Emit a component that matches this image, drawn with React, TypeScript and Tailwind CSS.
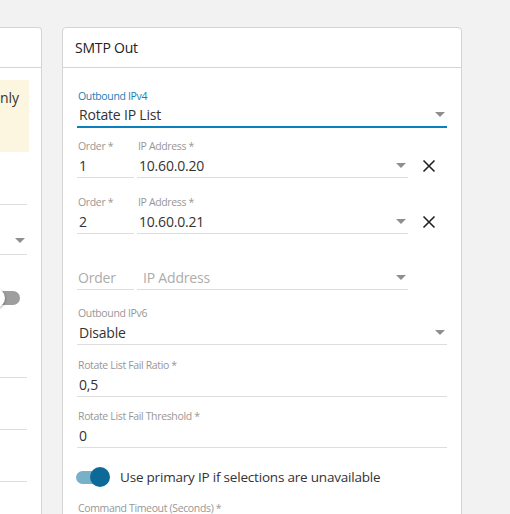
import React from "react";

const F = { fontFamily: '"Open Sans", "Noto Sans", sans-serif' };

function Arrow() {
  return (
    <svg width="10" height="5" viewBox="0 0 10 5" className="shrink-0">
      <path d="M0 0 L10 0 L5 5 Z" fill="#8f8f8f" />
    </svg>
  );
}

function XIcon() {
  return (
    <svg width="14" height="14" viewBox="0 0 14 14">
      <path d="M1.5 1.5 L12.5 12.5 M12.5 1.5 L1.5 12.5" stroke="#222" strokeWidth="1.6" />
    </svg>
  );
}

const LBL = "h-[14px] text-[10.5px] tracking-[-0.35px] leading-[14px] text-[#979797] pl-[1px] whitespace-nowrap";
const VAL = "text-[14px] tracking-[-0.2px] text-[#333] pl-[2px] whitespace-nowrap";

function Field({ label, value, select, className = "", placeholder, phPad = "pl-[2px]" }: { label?: string; value?: string; select?: boolean; className?: string; placeholder?: string; phPad?: string }) {
  return (
    <div className={"flex flex-col border-b border-[#dedede] " + className}>
      <div className={LBL}>{label}</div>
      <div className="h-[24px] flex items-center justify-between pr-[2px]">
        {value !== undefined ? (
          <span className={VAL}>{value}</span>
        ) : (
          <span className={"text-[14px] tracking-[-0.2px] text-[#acacac] whitespace-nowrap " + phPad}>{placeholder}</span>
        )}
        {select && <Arrow />}
      </div>
    </div>
  );
}

export default function App() {
  return (
    <div className="w-[510px] h-[514px] overflow-hidden bg-[#f2f2f2] pt-[27px] flex gap-[20px]" style={F}>
      {/* left panel (cut off) */}
      <div className="w-[42px] shrink-0 h-[600px] bg-white border-t border-r border-[#d4d4d4] rounded-tr-[4px] flex flex-col">
        <div className="h-[40px] border-b border-[#d4d4d4] shrink-0" />
        <div className="mt-[12px] w-[29px] h-[72px] bg-[#fcf6e0] pt-[8px] text-[14px] text-[#333] leading-[20px] text-right pr-[15px] overflow-hidden">
          <span className="block -mr-[1px]">nly</span>
        </div>
        <div className="mt-[52px] w-[27px] border-b border-[#dedede]" />
        <div className="w-[27px] h-[50px] border-b border-[#dedede] flex items-end justify-end pb-[11px] pr-[2px]">
          <Arrow />
        </div>
        <div className="mt-[36px] w-[20px] h-[14px] rounded-r-full bg-[#9e9e9e] relative">
          <div className="absolute -left-[15px] -top-[3px] w-[20px] h-[20px] rounded-full bg-white shadow-[0_1px_3px_rgba(0,0,0,0.4)]" />
        </div>
        <div className="mt-[72px] w-[27px] border-b border-[#dedede]" />
        <div className="mt-[51px] w-[27px] border-b border-[#dedede]" />
        <div className="mt-[51px] w-[27px] border-b border-[#dedede]" />
      </div>

      {/* right panel */}
      <div className="w-[400px] shrink-0 h-[600px] bg-white border border-[#d4d4d4] rounded-t-[4px] flex flex-col">
        <div className="h-[40px] shrink-0 border-b border-[#d4d4d4] flex items-center pl-[12px] text-[14px] tracking-[-0.2px] text-[#222]">
          SMTP Out
        </div>
        <div className="px-[14px] pt-[21px] flex flex-col">
          <div className="flex flex-col border-b-2 border-[#0b80bf]">
            <div className="h-[14px] text-[10.5px] tracking-[-0.35px] leading-[14px] text-[#1680b9] pl-[1px]">Outbound IPv4</div>
            <div className="h-[23px] flex items-center justify-between pr-[2px]">
              <span className={VAL}>Rotate IP List</span>
              <Arrow />
            </div>
          </div>

          <div className="mt-[11px] flex items-start">
            <Field label="Order *" value="1" className="w-[57px]" />
            <Field label="IP Address *" value="10.60.0.20" select className="w-[271px] ml-[3px]" />
            <div className="ml-[14px] mt-[20px]"><XIcon /></div>
          </div>
          <div className="mt-[17px] flex items-start">
            <Field label="Order *" value="2" className="w-[57px]" />
            <Field label="IP Address *" value="10.60.0.21" select className="w-[271px] ml-[3px]" />
            <div className="ml-[14px] mt-[20px]"><XIcon /></div>
          </div>
          <div className="mt-[17px] flex items-start">
            <Field placeholder="Order" className="w-[57px]" phPad="pl-[1px]" />
            <Field placeholder="IP Address" select className="w-[271px] ml-[3px]" phPad="pl-[6px]" />
          </div>

          <Field label="Outbound IPv6" value="Disable" select className="mt-[16px]" />
          <Field label="Rotate List Fail Ratio *" value="0,5" className="mt-[13px]" />
          <Field label="Rotate List Fail Threshold *" value="0" className="mt-[12px]" />

          <div className="mt-[19px] h-[20px] flex items-center">
            <div className="relative w-[28px] h-[13px] rounded-full bg-[#78b0c9] shrink-0 ml-[-1px]">
              <div className="absolute left-[14px] -top-[3.5px] w-[20px] h-[20px] rounded-full bg-[#0d6a98]" />
            </div>
            <span className="ml-[16px] text-[13.5px] tracking-[-0.2px] text-[#333] whitespace-nowrap">Use primary IP if selections are unavailable</span>
          </div>

          <div className="mt-[14px] h-[14px] text-[10.5px] tracking-[-0.35px] leading-[14px] text-[#979797] pl-[1px]">Command Timeout (Seconds) *</div>
        </div>
      </div>
    </div>
  );
}
